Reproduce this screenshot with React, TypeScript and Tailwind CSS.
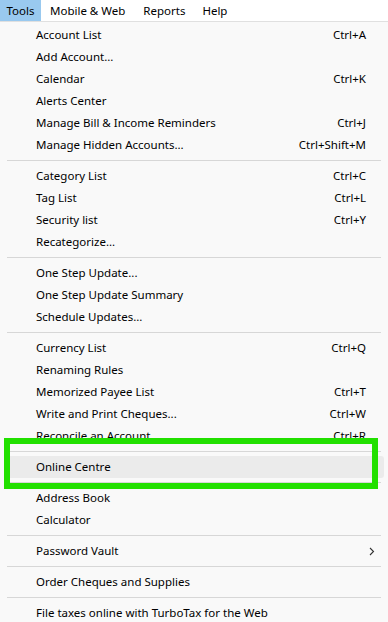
import React from "react";

type Item = { label: string; shortcut?: string; sub?: boolean; hover?: boolean };

const groups: Item[][] = [
  [
    { label: "Account List", shortcut: "Ctrl+A" },
    { label: "Add Account..." },
    { label: "Calendar", shortcut: "Ctrl+K" },
    { label: "Alerts Center" },
    { label: "Manage Bill & Income Reminders", shortcut: "Ctrl+J" },
    { label: "Manage Hidden Accounts...", shortcut: "Ctrl+Shift+M" },
  ],
  [
    { label: "Category List", shortcut: "Ctrl+C" },
    { label: "Tag List", shortcut: "Ctrl+L" },
    { label: "Security list", shortcut: "Ctrl+Y" },
    { label: "Recategorize..." },
  ],
  [
    { label: "One Step Update..." },
    { label: "One Step Update Summary" },
    { label: "Schedule Updates..." },
  ],
  [
    { label: "Currency List", shortcut: "Ctrl+Q" },
    { label: "Renaming Rules" },
    { label: "Memorized Payee List", shortcut: "Ctrl+T" },
    { label: "Write and Print Cheques...", shortcut: "Ctrl+W" },
    { label: "Reconcile an Account", shortcut: "Ctrl+R" },
  ],
  [{ label: "Online Centre", hover: true }],
  [{ label: "Address Book" }, { label: "Calculator" }],
  [{ label: "Password Vault", sub: true }],
  [{ label: "Order Cheques and Supplies" }],
  [{ label: "File taxes online with TurboTax for the Web" }],
];

function Row({ item }: { item: Item }) {
  return (
    <div
      className={`mx-[4px] flex h-[22px] items-center pl-[32px] pr-[18px] ${
        item.hover ? "rounded-[3px] bg-[#ebebeb]" : ""
      }`}
    >
      <span className="flex-1">{item.label}</span>
      {item.shortcut && <span>{item.shortcut}</span>}
      {item.sub && (
        <svg width="6" height="9" viewBox="0 0 6 9" className="mr-[-9px]">
          <path d="M1 1l3.5 3.5L1 8" fill="none" stroke="#333" strokeWidth="1.1" />
        </svg>
      )}
    </div>
  );
}

export default function App() {
  return (
    <div
      className="relative h-[622px] w-[388px] overflow-hidden bg-white text-[11.5px] text-black"
      style={{ fontFamily: '"Segoe UI", "Noto Sans", sans-serif' }}
    >
      <div className="flex h-[21px] items-center">
        <span className="flex h-full w-[41px] items-center justify-center bg-[#99c9ef]">Tools</span>
        <span className="pl-[9px] pr-[9px]">Mobile &amp; Web</span>
        <span className="px-[9px]">Reports</span>
        <span className="px-[8px]">Help</span>
      </div>
      <div className="border-t border-[#e0e0e0] bg-[#f9f9f9] pt-[2px]">
        {groups.map((g, i) => (
          <div key={i}>
            {i > 0 && <div className="mx-[7px] my-[4px] h-px bg-[#d7d7d7]" />}
            {g.map((item) => (
              <Row key={item.label} item={item} />
            ))}
          </div>
        ))}
      </div>
      <div className="pointer-events-none absolute left-[4px] top-[438px] h-[51px] w-[374px] border-[6px] border-[#22e000]" />
    </div>
  );
}
